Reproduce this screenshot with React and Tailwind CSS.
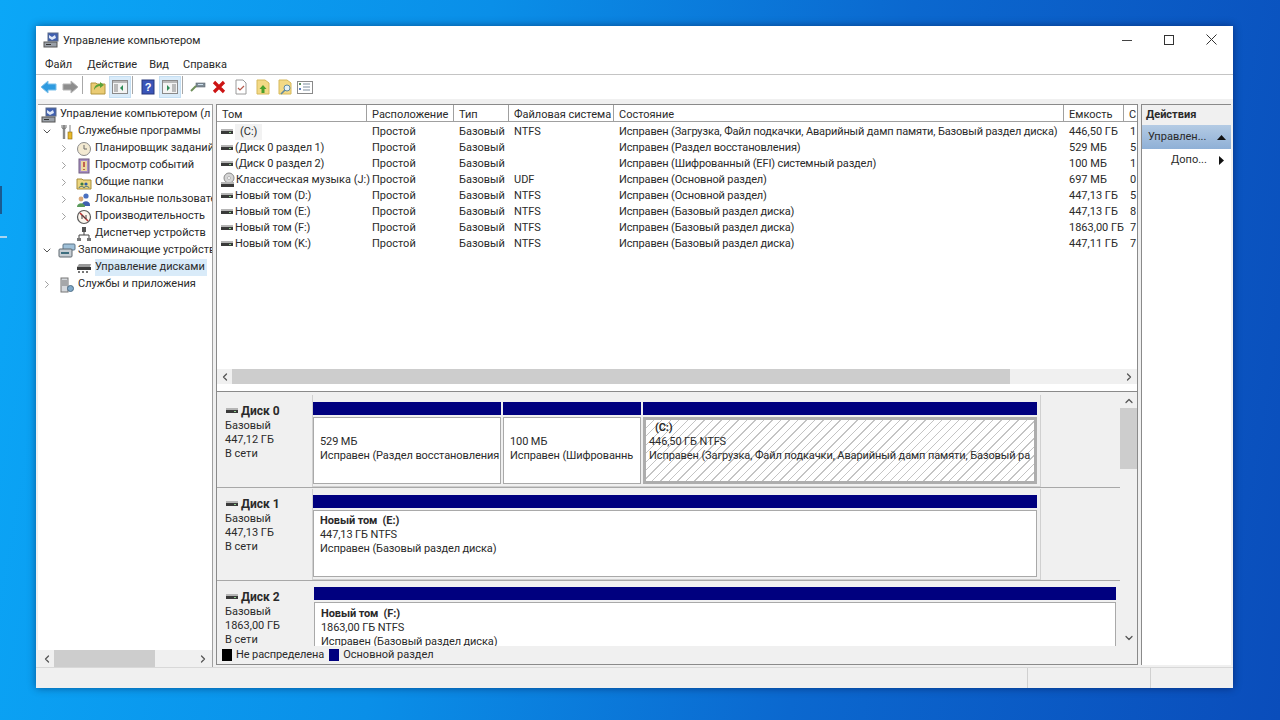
import { ChevronDown, ChevronRight, ChevronLeft, ChevronUp } from "lucide-react";

const FONT = "font-['Roboto','Noto_Sans',sans-serif]";

const volumes = [
  { name: "(C:)", pad: true, type: "Базовый", fs: "NTFS", state: "Исправен (Загрузка, Файл подкачки, Аварийный дамп памяти, Базовый раздел диска)", size: "446,50 ГБ", free: "1" },
  { name: "(Диск 0 раздел 1)", type: "Базовый", fs: "", state: "Исправен (Раздел восстановления)", size: "529 МБ", free: "5" },
  { name: "(Диск 0 раздел 2)", type: "Базовый", fs: "", state: "Исправен (Шифрованный (EFI) системный раздел)", size: "100 МБ", free: "1" },
  { name: "Классическая музыка (J:)", cd: true, type: "Базовый", fs: "UDF", state: "Исправен (Основной раздел)", size: "697 МБ", free: "0" },
  { name: "Новый том (D:)", type: "Базовый", fs: "NTFS", state: "Исправен (Основной раздел)", size: "447,13 ГБ", free: "5" },
  { name: "Новый том (E:)", type: "Базовый", fs: "NTFS", state: "Исправен (Базовый раздел диска)", size: "447,13 ГБ", free: "8" },
  { name: "Новый том (F:)", type: "Базовый", fs: "NTFS", state: "Исправен (Базовый раздел диска)", size: "1863,00 ГБ", free: "7" },
  { name: "Новый том (K:)", type: "Базовый", fs: "NTFS", state: "Исправен (Базовый раздел диска)", size: "447,11 ГБ", free: "7" },
];

function DiskIcon({ className = "" }) {
  return (
    <svg width="14" height="8" viewBox="0 0 14 8" className={"shrink-0 " + className}>
      <rect x="1" y="1" width="12" height="2" fill="#b5b5b5" />
      <rect x="1" y="3" width="12" height="3" fill="#3a3a3a" />
      <rect x="9" y="4" width="2" height="1" fill="#8fd08f" />
    </svg>
  );
}

function CdIcon() {
  return (
    <svg width="16" height="16" viewBox="0 0 16 16" className="shrink-0">
      <circle cx="9" cy="6" r="5" fill="#d5d5d5" stroke="#8a8a8a" />
      <circle cx="9" cy="6" r="1.5" fill="#fff" stroke="#888" strokeWidth="0.5" />
      <rect x="1" y="10" width="13" height="2" fill="#b5b5b5" />
      <rect x="1" y="12" width="13" height="3" fill="#3a3a3a" />
    </svg>
  );
}

function ComputerIcon() {
  return (
    <svg width="16" height="16" viewBox="0 0 16 16" className="shrink-0">
      <rect x="5" y="1" width="10" height="8" fill="#3f5fb0" stroke="#5a6a8a" />
      <path d="M6 3l3 2 3-2 1 3-4 2-3-2z" fill="#dfe8f8" />
      <rect x="1" y="10" width="13" height="5" fill="#9aa0a8" stroke="#555" />
      <rect x="3" y="12" width="5" height="1" fill="#333" />
    </svg>
  );
}

const treeIcons = {
  tools: (
    <svg width="16" height="16" viewBox="0 0 16 16">
      <path d="M5 1v14" stroke="#8a8a8a" strokeWidth="2.4" />
      <path d="M3 1v3l2 1 2-1V1" fill="none" stroke="#777" />
      <path d="M11 1v7" stroke="#aaa" strokeWidth="1.5" />
      <rect x="9" y="8" width="4" height="7" fill="#e8b92c" stroke="#8a6a10" strokeWidth="0.6" />
    </svg>
  ),
  clock: (
    <svg width="16" height="16" viewBox="0 0 16 16">
      <circle cx="8" cy="8" r="6.5" fill="#f3ead2" stroke="#8c8c8c" />
      <path d="M8 4v4h3" fill="none" stroke="#6a6a6a" />
    </svg>
  ),
  log: (
    <svg width="16" height="16" viewBox="0 0 16 16">
      <rect x="3" y="1" width="10" height="14" fill="#a98fc4" stroke="#6f5d80" />
      <rect x="5" y="3" width="6" height="10" fill="#ecd9a0" />
      <path d="M8 4v5M8 11v1" stroke="#b03030" strokeWidth="1.4" />
    </svg>
  ),
  share: (
    <svg width="16" height="16" viewBox="0 0 16 16">
      <path d="M1 4h5l1 1h8v9H1z" fill="#ecd67f" stroke="#a78c3a" />
      <circle cx="6" cy="9" r="1.6" fill="#3f7a3f" />
      <circle cx="10" cy="9" r="1.6" fill="#2f5fa8" />
      <path d="M3 13c0-2 5-2 5 0M8 13c0-2 5-2 5 0" fill="none" stroke="#3f6a7a" />
    </svg>
  ),
  users: (
    <svg width="16" height="16" viewBox="0 0 16 16">
      <circle cx="10" cy="4" r="2.6" fill="#4a70c0" />
      <path d="M6 13c0-5 8-5 8 0v1H6z" fill="#3f5fb0" />
      <circle cx="5" cy="7" r="2.4" fill="#d8a878" />
      <path d="M1 15c0-5 8-5 8 0z" fill="#5a9a5a" />
    </svg>
  ),
  perf: (
    <svg width="16" height="16" viewBox="0 0 16 16">
      <circle cx="8" cy="8" r="6.5" fill="#fbf6ee" stroke="#5a5a5a" strokeWidth="1.2" />
      <path d="M4 4l8 8" stroke="#b83030" strokeWidth="1.6" />
      <path d="M6 10V6l4 4V6" fill="none" stroke="#444" />
    </svg>
  ),
  device: (
    <svg width="16" height="16" viewBox="0 0 16 16">
      <rect x="6" y="1" width="4" height="5" fill="#555" />
      <path d="M8 6v3M3 12V9h10v3" fill="none" stroke="#444" />
      <rect x="1" y="12" width="4" height="3" fill="#777" />
      <rect x="11" y="12" width="4" height="3" fill="#777" />
    </svg>
  ),
  storage: (
    <svg width="18" height="16" viewBox="0 0 18 16">
      <rect x="5" y="1" width="12" height="6" rx="1" fill="#9fc0d8" stroke="#5c7487" />
      <rect x="1" y="6" width="13" height="8" rx="1" fill="#c7ced4" stroke="#5f6870" />
      <rect x="3" y="9" width="8" height="2" fill="#3f6f80" />
    </svg>
  ),
  disks: (
    <svg width="16" height="14" viewBox="0 0 16 14">
      <path d="M3 3h12l-1 3H1z" fill="#9a9a9a" />
      <rect x="1" y="6" width="14" height="3" fill="#3a3a3a" />
      <path d="M3 10v2M7 10v2M11 10v2" stroke="#555" strokeWidth="1.6" />
    </svg>
  ),
  services: (
    <svg width="16" height="16" viewBox="0 0 16 16">
      <rect x="2" y="1" width="7" height="14" fill="#d5d8dc" stroke="#777" />
      <path d="M3 4h5M3 6h5M3 8h5" stroke="#777" />
      <circle cx="11.5" cy="11.5" r="3" fill="#7fa8c8" stroke="#4f6f88" />
    </svg>
  ),
};

const tree = [
  { label: "Служебные программы", icon: "tools", level: 0, arrow: "down" },
  { label: "Планировщик заданий", icon: "clock", level: 1, arrow: "right" },
  { label: "Просмотр событий", icon: "log", level: 1, arrow: "right" },
  { label: "Общие папки", icon: "share", level: 1, arrow: "right" },
  { label: "Локальные пользователи", icon: "users", level: 1, arrow: "right" },
  { label: "Производительность", icon: "perf", level: 1, arrow: "right" },
  { label: "Диспетчер устройств", icon: "device", level: 1 },
  { label: "Запоминающие устройства", icon: "storage", level: 0, arrow: "down" },
  { label: "Управление дисками", icon: "disks", level: 1, selected: true },
  { label: "Службы и приложения", icon: "services", level: 0, arrow: "right" },
];

function TreeRow({ item }) {
  return (
    <div className={"flex h-[17px] items-center whitespace-nowrap " + (item.level === 1 ? "pl-[20px]" : "pl-[3px]")}>
      <span className="flex w-[12px] shrink-0 justify-center">
        {item.arrow === "down" && <ChevronDown size={13} strokeWidth={2} className="text-[#555]" />}
        {item.arrow === "right" && <ChevronRight size={13} strokeWidth={2} className="text-[#a0a0a0]" />}
      </span>
      <span className="ml-[5px] flex w-[18px] shrink-0 justify-center">{treeIcons[item.icon]}</span>
      <span className={"ml-[2px] pr-[2px] " + (item.selected ? "bg-[#d9ebf9]" : "")}>{item.label}</span>
    </div>
  );
}

function ToolBtn({ children, active, className = "" }) {
  return (
    <span className={"flex h-[22px] w-[22px] shrink-0 items-center justify-center " + (active ? "border border-[#c5dff3] bg-[#d9ebf9] " : "") + className}>
      {children}
    </span>
  );
}

function Sep() {
  return <span className="mx-[1px] h-[18px] w-px shrink-0 bg-[#a8a8a8]" />;
}

function Toolbar() {
  return (
    <div className="flex h-[24px] shrink-0 items-start bg-white pt-[1px] pl-[1px]">
      <ToolBtn>
        <svg width="17" height="14" viewBox="0 0 17 14"><path d="M1 7l7-6v3h8v6H8v3z" fill="#2f9be0" stroke="#7cc0ea" /></svg>
      </ToolBtn>
      <ToolBtn>
        <svg width="17" height="14" viewBox="0 0 17 14"><path d="M16 7L9 1v3H1v6h8v3z" fill="#8d8d8d" stroke="#b5b5b5" /></svg>
      </ToolBtn>
      <Sep />
      <span className="w-[3px]" />
      <ToolBtn>
        <svg width="16" height="16" viewBox="0 0 16 16"><path d="M1 4h5l1 1h8v10H1z" fill="#eacb73" stroke="#b3963f" /><path d="M4 11c0-4 3-6 6-6V3l4 3-4 3V7c-2 0-4 1-6 4z" fill="#5aa23a" /></svg>
      </ToolBtn>
      <ToolBtn active>
        <svg width="16" height="14" viewBox="0 0 16 14"><rect x="0.5" y="0.5" width="15" height="13" fill="#f3f3f3" stroke="#8a8a8a" /><rect x="1" y="1" width="14" height="2" fill="#b9b9b9" /><rect x="2" y="4" width="4" height="8" fill="#bbb" /><path d="M11 5v6L8 8z" fill="#2e8b57" /></svg>
      </ToolBtn>
      <Sep />
      <span className="w-[3px]" />
      <ToolBtn>
        <svg width="14" height="16" viewBox="0 0 14 16"><rect x="1" y="1" width="12" height="14" fill="#3a55b8" stroke="#26367c" /><text x="7" y="12" fontSize="11" fontWeight="700" textAnchor="middle" fill="#fff" fontFamily="Liberation Sans">?</text></svg>
      </ToolBtn>
      <ToolBtn active>
        <svg width="16" height="14" viewBox="0 0 16 14"><rect x="0.5" y="0.5" width="15" height="13" fill="#f3f3f3" stroke="#8a8a8a" /><rect x="1" y="1" width="14" height="2" fill="#b9b9b9" /><rect x="10" y="4" width="4" height="8" fill="#bbb" /><path d="M5 5v6l3-3z" fill="#2e8b57" /></svg>
      </ToolBtn>
      <Sep />
      <span className="w-[3px]" />
      <ToolBtn>
        <svg width="16" height="14" viewBox="0 0 16 14"><rect x="6" y="3" width="9" height="4" fill="#7f8c96" stroke="#5a6770" strokeWidth="0.6" /><path d="M6 6L1 11" stroke="#6f8f5a" strokeWidth="2" /><rect x="8" y="4" width="5" height="1" fill="#cfe2f0" /></svg>
      </ToolBtn>
      <ToolBtn className="-ml-[1px]">
        <svg width="14" height="14" viewBox="0 0 14 14"><path d="M2 2l10 10M12 2L2 12" stroke="#cc1414" strokeWidth="3.2" /></svg>
      </ToolBtn>
      <ToolBtn>
        <svg width="14" height="16" viewBox="0 0 14 16"><path d="M2 1h7l3 3v11H2z" fill="#fff" stroke="#9a9a9a" /><path d="M4 9l2 2 4-4" fill="none" stroke="#b5584a" strokeWidth="1.2" /></svg>
      </ToolBtn>
      <ToolBtn>
        <svg width="14" height="16" viewBox="0 0 14 16"><path d="M1 1h8l4 3v11H1z" fill="#f3d985" stroke="#d6b95c" /><path d="M7 6l3.5 4H8.5v4h-3v-4H3.5z" fill="#4aa02c" /></svg>
      </ToolBtn>
      <ToolBtn>
        <svg width="15" height="16" viewBox="0 0 15 16"><path d="M1 1h8l4 3v11H1z" fill="#f3d985" stroke="#d6b95c" /><circle cx="9" cy="9" r="3" fill="#e5f0f6" stroke="#5f8aa0" /><path d="M7 11l-4 4" stroke="#5f8aa0" strokeWidth="1.6" /></svg>
      </ToolBtn>
      <ToolBtn className="-ml-[2px]">
        <svg width="16" height="13" viewBox="0 0 16 13"><rect x="0.5" y="0.5" width="15" height="12" fill="#fff" stroke="#8a8a8a" /><path d="M6 3h7M6 6h7M6 9h7" stroke="#7f8f9f" /><rect x="2" y="2" width="2" height="2" fill="#5f8f5f" /><rect x="2" y="7" width="2" height="2" fill="#5f7fbf" /></svg>
      </ToolBtn>
    </div>
  );
}

function ListHeader() {
  const cols = [
    { t: "Том", c: "w-[150px]" },
    { t: "Расположение", c: "w-[87px]" },
    { t: "Тип", c: "w-[55px]" },
    { t: "Файловая система", c: "w-[105px]" },
    { t: "Состояние", c: "w-[450px]" },
    { t: "Емкость", c: "w-[60px]" },
    { t: "С", c: "w-[14px]" },
  ];
  return (
    <div className="flex h-[17px] shrink-0 overflow-hidden bg-white">
      {cols.map((col) => (
        <div key={col.t} className={"h-full shrink-0 overflow-hidden border-r border-b border-[#a0a0a0] pl-[5px] leading-[19px] whitespace-nowrap " + col.c}>
          {col.t}
        </div>
      ))}
    </div>
  );
}

function ListRow({ v }) {
  return (
    <div className="flex h-[16px] items-center whitespace-nowrap">
      <div className="flex w-[149px] shrink-0 items-center pl-[3px]">
        {v.cd ? <CdIcon /> : <DiskIcon />}
        <span className={v.pad ? "ml-[1px] bg-[#f2f2f2] px-[5px]" : v.cd ? "ml-[0px]" : "ml-[1px] tracking-[-0.1px]"}>{v.name}</span>
      </div>
      <div className="w-[87px] shrink-0 pl-[6px]">Простой</div>
      <div className="w-[55px] shrink-0 pl-[6px]">{v.type}</div>
      <div className="w-[105px] shrink-0 pl-[6px]">{v.fs}</div>
      <div className="w-[450px] shrink-0 pl-[6px] tracking-[-0.14px]">{v.state}</div>
      <div className="w-[61px] shrink-0 pl-[6px]">{v.size}</div>
      <div className="w-[14px] shrink-0 overflow-hidden pl-[6px]">{v.free}</div>
    </div>
  );
}

function DiskLabel({ name, size, top = "pt-[8px]" }) {
  return (
    <div className={"h-full w-[95px] shrink-0 bg-[#f0f0f0] pl-[8px] leading-[14px] " + top}>
      <div className="flex h-[16px] items-center text-[12px] font-bold">
        <DiskIcon />
        <span className="ml-[2px]">{name}</span>
      </div>
      <div>Базовый</div>
      <div>{size}</div>
      <div>В сети</div>
    </div>
  );
}

function Part({ className, hatch, children }) {
  return (
    <div className={"shrink-0 " + className}>
      <div className="h-[13px] bg-[#00007f]" />
      <div className={"mt-[2px] h-[67px] overflow-hidden pt-[1px] leading-[14px] tracking-[-0.1px] whitespace-nowrap " + (hatch ? "border-[3px] border-[#adadad] bg-[repeating-linear-gradient(135deg,#ffffff_0,#ffffff_5px,#c4c4c4_5px,#c4c4c4_6px)] pl-[3px]" : "border border-[#a9a9a9] bg-white pl-[6px]")}>
        {children}
      </div>
    </div>
  );
}

function DiskArea() {
  return (
    <div className="flex h-[254px] shrink-0 bg-[#f0f0f0]">
      <div className="min-w-0 flex-1 overflow-hidden pt-[3px]">
        {/* Диск 0 */}
        <div className="flex h-[92px] items-stretch">
          <DiskLabel name="Диск 0" size="447,12 ГБ" />
          <div className="h-[92px] w-[729px] shrink-0 border-r border-b border-l border-[#d0d0d0] bg-[#f0f0f0] pt-[7px]">
            <div className="flex gap-[2px]">
              <Part className="w-[188px]">
                <div className="pt-[16px]">529 МБ</div>
                <div>Исправен (Раздел восстановления</div>
              </Part>
              <Part className="w-[138px]">
                <div className="pt-[16px]">100 МБ</div>
                <div>Исправен (Шифрованнь</div>
              </Part>
              <Part className="w-[394px]" hatch>
                <div className="pl-[6px] font-bold">(C:)</div>
                <div>446,50 ГБ NTFS</div>
                <div>Исправен (Загрузка, Файл подкачки, Аварийный дамп памяти, Базовый ра</div>
              </Part>
            </div>
          </div>
        </div>
        <div className="h-px bg-[#a8a8a8]" />
        {/* Диск 1 */}
        <div className="mt-[1px] flex h-[91px]">
          <DiskLabel name="Диск 1" size="447,13 ГБ" top="pt-[7px]" />
          <div className="h-[91px] w-[729px] shrink-0 border-r border-b border-l border-[#d0d0d0] pt-[6px]">
            <Part className="w-[724px]">
              <div className="pt-[2px] font-bold">Новый том&nbsp; (E:)</div>
              <div>447,13 ГБ NTFS</div>
              <div>Исправен (Базовый раздел диска)</div>
            </Part>
          </div>
        </div>
        <div className="h-px bg-[#a8a8a8]" />
        {/* Диск 2 */}
        <div className="mt-[1px] flex h-[70px]">
          <DiskLabel name="Диск 2" size="1863,00 ГБ" top="pt-[7px]" />
          <div className="pt-[5px] pl-[2px]">
            <Part className="w-[802px]">
              <div className="pt-[3px] font-bold">Новый том&nbsp; (F:)</div>
              <div>1863,00 ГБ NTFS</div>
              <div>Исправен (Базовый раздел диска)</div>
            </Part>
          </div>
        </div>
      </div>
      <div className="flex w-[17px] shrink-0 flex-col items-center bg-[#f0f0f0]">
        <ChevronUp size={12} strokeWidth={2.5} className="mt-[3px] h-[12px] shrink-0 text-[#555]" />
        <div className="mt-[1px] h-[61px] w-full bg-[#cdcdcd]" />
        <div className="flex-1" />
        <ChevronDown size={12} strokeWidth={2.5} className="mb-[2px] shrink-0 text-[#555]" />
      </div>
    </div>
  );
}

export default function App() {
  return (
    <div className={"relative h-[720px] w-[1280px] overflow-hidden bg-[linear-gradient(100deg,#0ba7f7_0%,#0a8fe8_35%,#0b68cf_65%,#0a4dbb_100%)] text-[11px] text-[#2a2a2a] " + FONT}>
      {/* обрезанный значок на рабочем столе */}
      <div className="absolute top-[186px] left-0 h-[28px] w-[2px] bg-[#1a5a90]" />
      <div className="absolute top-[236px] left-0 h-[2px] w-[7px] bg-[#a8d4f0]" />

      {/* ОКНО */}
      <div className="absolute top-[26px] left-[36px] flex h-[662px] w-[1197px] flex-col bg-white shadow-[0_0_8px_rgba(0,0,40,0.45)]">
        {/* TITLE */}
        <div className="flex h-[27px] shrink-0 items-center pl-[7px]">
          <ComputerIcon />
          <span className="ml-[4px] pt-[3px]">Управление компьютером</span>
          <div className="mr-[16px] ml-auto flex items-center gap-[32px]">
            <svg width="10" height="10" viewBox="0 0 10 10"><path d="M0 5.5h10" stroke="#444" /></svg>
            <svg width="10" height="10" viewBox="0 0 10 10"><rect x="0.5" y="0.5" width="9" height="9" fill="none" stroke="#333" /></svg>
            <svg width="11" height="11" viewBox="0 0 11 11"><path d="M0.5 0.5l10 10M10.5 0.5l-10 10" stroke="#333" /></svg>
          </div>
        </div>

        {/* MENU */}
        <div className="flex h-[22px] shrink-0 items-center border-b border-[#c4c4c4] pt-[3px] pl-[9px]">
          <span>Файл</span>
          <span className="ml-[15px]">Действие</span>
          <span className="ml-[12px]">Вид</span>
          <span className="ml-[14px]">Справка</span>
        </div>

        <Toolbar />

        {/* MAIN */}
        <div className="flex min-h-0 flex-1 bg-[#f0f0f0] pt-[5px] pr-[2px] pl-[2px]">
          {/* TREE */}
          <div className="flex w-[175px] shrink-0 flex-col border-t border-r border-[#a0a0a0] bg-white">
            <div className="min-h-0 flex-1 overflow-hidden pt-[1px]">
              <div className="flex h-[17px] items-center pl-[3px] whitespace-nowrap">
                <ComputerIcon />
                <span className="ml-[3px]">Управление компьютером (л</span>
              </div>
              {tree.map((item) => (
                <TreeRow key={item.label} item={item} />
              ))}
            </div>
            <div className="flex h-[17px] shrink-0 items-center bg-[#f0f0f0]">
              <ChevronLeft size={12} strokeWidth={2.5} className="ml-[3px] text-[#555]" />
              <div className="ml-[1px] h-full w-[101px] bg-[#cdcdcd]" />
              <ChevronRight size={12} strokeWidth={2.5} className="mr-[3px] ml-auto text-[#555]" />
            </div>
          </div>

          {/* CENTER */}
          <div className="ml-[3px] flex h-[561px] w-[922px] shrink-0 flex-col border border-[#8a8a8a] bg-white">
            <ListHeader />
            <div className="min-h-0 flex-1 pt-[2px]">
              {volumes.map((v) => (
                <ListRow key={v.name} v={v} />
              ))}
            </div>
            <div className="flex h-[15px] shrink-0 items-center bg-[#f0f0f0]">
              <ChevronLeft size={12} strokeWidth={2.5} className="ml-[2px] text-[#555]" />
              <div className="ml-[1px] h-full w-[778px] bg-[#cdcdcd]" />
              <ChevronRight size={12} strokeWidth={2.5} className="mr-[2px] ml-auto text-[#555]" />
            </div>
            <div className="h-[8px] shrink-0 border-b border-[#8a8a8a] bg-white" />
            <DiskArea />
            <div className="flex h-[18px] shrink-0 items-center bg-[#f0f0f0] pl-[5px]">
              <span className="h-[12px] w-[10px] bg-black" />
              <span className="ml-[4px] pt-[1px] tracking-[-0.1px]">Не распределена</span>
              <span className="ml-[5px] h-[12px] w-[10px] bg-[#00007f]" />
              <span className="ml-[4px] pt-[1px]">Основной раздел</span>
            </div>
          </div>

          {/* ACTIONS */}
          <div className="ml-[3px] flex h-[561px] min-w-0 flex-1 flex-col border-t border-l border-[#8a8a8a] bg-white">
            <div className="flex h-[20px] shrink-0 items-center bg-[#f0f0f0] pt-[1px] pl-[4px] font-bold">Действия</div>
            <div className="flex h-[24px] shrink-0 items-center bg-[linear-gradient(#b4cbe4,#8fb0d6)] pt-[1px] pl-[6px]">
              <span>Управлен...</span>
              <svg width="9" height="5" viewBox="0 0 9 5" className="mr-[5px] ml-auto"><path d="M0 5L4.5 0 9 5z" fill="#111" /></svg>
            </div>
            <div className="flex h-[22px] shrink-0 items-center pt-[1px] pl-[29px]">
              <span>Допо...</span>
              <svg width="5" height="9" viewBox="0 0 5 9" className="mr-[7px] ml-auto"><path d="M0 0l5 4.5L0 9z" fill="#111" /></svg>
            </div>
          </div>
        </div>

        {/* STATUS */}
        <div className="flex h-[21px] shrink-0 border-t border-[#d8d8d8] bg-[#f0f0f0]">
          <div className="w-[992px] shrink-0 border-r border-[#d0d0d0]" />
          <div className="w-[123px] shrink-0 border-r border-[#d0d0d0]" />
        </div>
      </div>
    </div>
  );
}
